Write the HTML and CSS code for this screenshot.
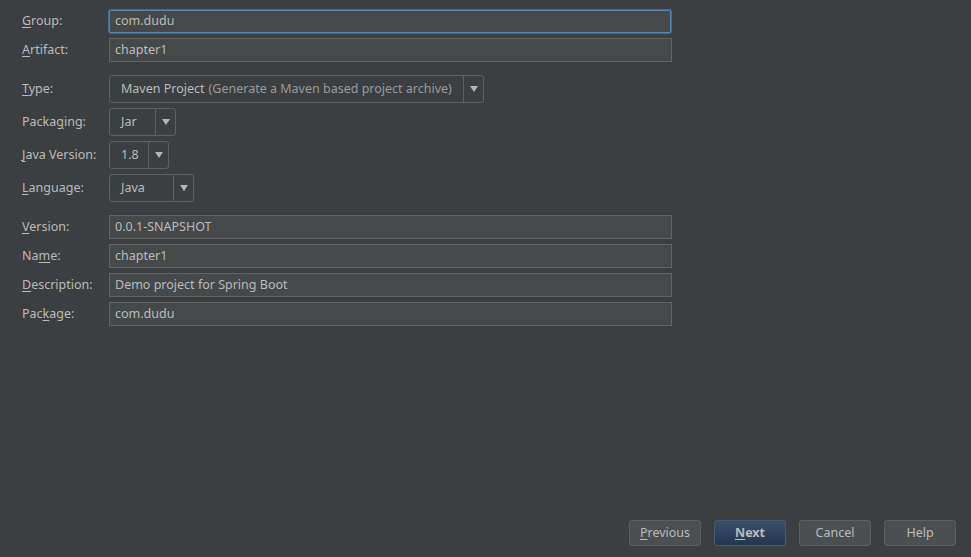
FILE: index.html
```html
<!DOCTYPE html>
<html>
<head>
<meta charset="utf-8">
<link rel="stylesheet" href="styles.css">
</head>
<body>
<div class="page">
  <div class="form">
    <div class="section">
      <div class="row"><label class="lbl"><u>G</u>roup:</label><div class="field focus">com.dudu</div></div>
      <div class="row"><label class="lbl"><u>A</u>rtifact:</label><div class="field">chapter1</div></div>
    </div>
    <div class="section">
      <div class="row tall"><label class="lbl"><u>T</u>ype:</label><div class="combo w-type"><span class="cv">Maven Project <span class="dim">(Generate a Maven based project archive)</span></span><span class="arr"></span></div></div>
      <div class="row tall"><label class="lbl">Packa<u>g</u>ing:</label><div class="combo w-pack"><span class="cv">Jar</span><span class="arr"></span></div></div>
      <div class="row tall"><label class="lbl"><u>J</u>ava Version:</label><div class="combo w-java"><span class="cv">1.8</span><span class="arr"></span></div></div>
      <div class="row tall"><label class="lbl"><u>L</u>anguage:</label><div class="combo w-lang"><span class="cv">Java</span><span class="arr"></span></div></div>
    </div>
    <div class="section">
      <div class="row"><label class="lbl"><u>V</u>ersion:</label><div class="field">0.0.1-SNAPSHOT</div></div>
      <div class="row"><label class="lbl">Na<u>m</u>e:</label><div class="field">chapter1</div></div>
      <div class="row"><label class="lbl"><u>D</u>escription:</label><div class="field">Demo project for Spring Boot</div></div>
      <div class="row"><label class="lbl">Pac<u>k</u>age:</label><div class="field">com.dudu</div></div>
    </div>
  </div>
  <div class="buttons">
    <button class="btn"><u>P</u>revious</button>
    <button class="btn primary"><u>N</u>ext</button>
    <button class="btn">Cancel</button>
    <button class="btn">Help</button>
  </div>
</div>
</body>
</html>
```
FILE: styles.css
```css
html, body {
  margin: 0;
  padding: 0;
  background: #3c3f41;
}
body {
  font-family: "Noto Sans", "Open Sans", sans-serif;
  font-size: 12.5px;
  line-height: 16px;
  color: #bbbbbb;
}
.page {
  width: 971px;
  height: 557px;
  box-sizing: border-box;
  display: flex;
  flex-direction: column;
  justify-content: space-between;
  padding: 9px 15px 11px 22px;
}
.form {
  display: flex;
  flex-direction: column;
  gap: 13px;
}
.section {
  display: flex;
  flex-direction: column;
  gap: 5px;
}
.row {
  display: flex;
  align-items: center;
  height: 24px;
}
.row.tall {
  height: 28px;
}
.lbl {
  width: 87px;
  flex: none;
  white-space: nowrap;
}
u {
  text-decoration-thickness: 1px;
  text-underline-offset: 2px;
}
.field {
  width: 563px;
  height: 24px;
  box-sizing: border-box;
  background: #45494a;
  border: 1px solid #646464;
  padding: 0 5px;
  display: flex;
  align-items: center;
  white-space: nowrap;
}
.field.focus {
  width: 562px;
  height: 23px;
  border: 1px solid #5486b8;
  box-shadow: 0 0 0 1px #44698f;
  border-radius: 2px;
}
.combo {
  height: 28px;
  box-sizing: border-box;
  border: 1px solid #5e6060;
  border-radius: 3px;
  display: flex;
  align-items: stretch;
  background: #3c3f41;
}
.cv {
  flex: 1;
  display: flex;
  align-items: center;
  padding: 0 0 0 11px;
  white-space: nowrap;
}
.dim {
  color: #9a9a9a;
  margin-left: 4px;
}
.arr {
  width: 19px;
  flex: none;
  border-left: 1px solid #5e6060;
  position: relative;
}
.arr::after {
  content: "";
  position: absolute;
  left: 6px;
  top: 10px;
  border-left: 4px solid transparent;
  border-right: 4px solid transparent;
  border-top: 6px solid #b5b5b5;
}
.w-type { width: 375px; }
.w-pack { width: 67px; }
.w-java { width: 60px; }
.w-lang { width: 85px; }
.buttons {
  display: flex;
  justify-content: flex-end;
  gap: 13px;
}
.btn {
  width: 72px;
  height: 26px;
  box-sizing: border-box;
  border: 1px solid #5e6060;
  border-radius: 3px;
  background: #4b4f51;
  color: #bbbbbb;
  font-family: "Noto Sans", "Open Sans", sans-serif;
  font-size: 12.5px;
  padding: 0 0 2px;
}
.btn.primary {
  background: linear-gradient(#384f6b, #233650);
  border-color: #4c5a6a;
  font-weight: bold;
  color: #bbbbbb;
}
```
